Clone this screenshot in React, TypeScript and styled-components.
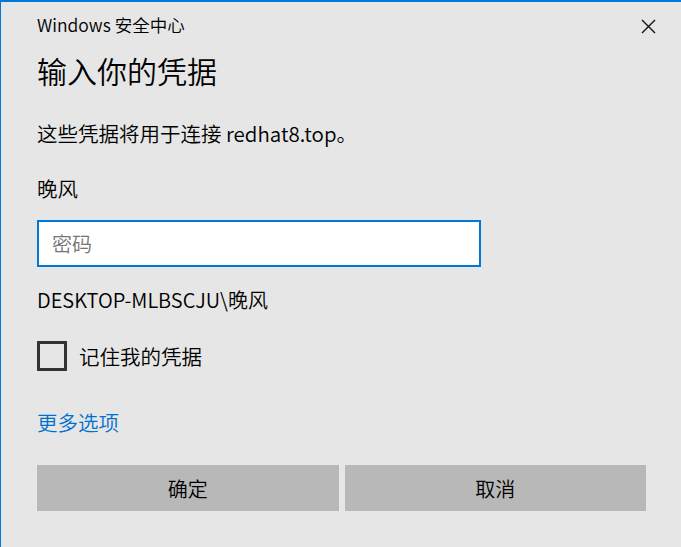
import styled, { createGlobalStyle } from 'styled-components'

const GlobalStyle = createGlobalStyle`
  html, body {
    margin: 0;
    padding: 0;
    background: #e6e6e6;
  }
  * {
    box-sizing: border-box;
  }
`

export default function App() {
  return (
    <>
      <GlobalStyle />
      <Window>
        <TitleBar>
          <Title>Windows 安全中心</Title>
          <CloseButton aria-label="关闭">
            <svg width="15" height="15" viewBox="0 0 15 15">
              <path d="M1 1 L14 14 M14 1 L1 14" stroke="#111" strokeWidth="1.4" fill="none" />
            </svg>
          </CloseButton>
        </TitleBar>
        <Content>
          <Heading>输入你的凭据</Heading>
          <Text marginTop="29px">这些凭据将用于连接 redhat8.top。</Text>
          <Text marginTop="27px">晚风</Text>
          <PasswordInput type="password" placeholder="密码" />
          <Text marginTop="19px" size="20px">DESKTOP-MLBSCJU\晚风</Text>
          <CheckRow>
            <CheckBox />
            <CheckLabel>记住我的凭据</CheckLabel>
          </CheckRow>
          <MoreLink href="#">更多选项</MoreLink>
          <ButtonRow>
            <Button>确定</Button>
            <Button>取消</Button>
          </ButtonRow>
        </Content>
      </Window>
    </>
  )
}

const font = `"Noto Sans CJK SC", "Noto Sans", sans-serif`

const Window = styled.div`
  height: 100vh;
  display: flex;
  flex-direction: column;
  background: #e6e6e6;
  border-top: 2px solid #0078d7;
  border-left: 1px solid #0078d7;
  font-family: ${font};
  font-weight: 350;
  color: #000;
`

const TitleBar = styled.div`
  height: 48px;
  display: flex;
  align-items: center;
  justify-content: space-between;
  padding: 0 25px 0 36px;
`

const Title = styled.div`
  font-size: 17.5px;
  line-height: 22px;
  margin-top: -2px;
`

const CloseButton = styled.button`
  background: none;
  border: none;
  padding: 0;
  width: 15px;
  height: 15px;
  display: flex;
  cursor: pointer;
`

const Content = styled.div`
  display: flex;
  flex-direction: column;
  padding: 0 35px 0 36px;
`

const Heading = styled.h1`
  margin: 0;
  font-size: 30px;
  font-weight: 350;
  line-height: 40px;
`

const Text = styled.div<{ marginTop?: string; size?: string }>`
  font-size: ${p => p.size || '20.5px'};
  line-height: 28px;
  margin-top: ${p => p.marginTop || '0'};
`

const PasswordInput = styled.input`
  margin-top: 18px;
  width: 444px;
  height: 47px;
  border: 2px solid #0078d7;
  background: #fff;
  padding: 0 13px;
  font-family: ${font};
  font-weight: 350;
  font-size: 20px;
  outline: none;

  ::placeholder {
    color: #999;
  }
`

const CheckRow = styled.div`
  margin-top: 27px;
  display: flex;
  align-items: center;
  gap: 12px;
  height: 30px;
`

const CheckBox = styled.div`
  width: 30px;
  height: 30px;
  border: 3px solid #333;
`

const CheckLabel = styled.span`
  font-size: 20.5px;
  line-height: 28px;
`

const MoreLink = styled.a`
  margin-top: 37px;
  font-size: 20.5px;
  line-height: 28px;
  color: #0070d0;
  text-decoration: none;
  align-self: flex-start;
`

const ButtonRow = styled.div`
  margin-top: 29px;
  display: grid;
  grid-template-columns: 1fr 1fr;
  gap: 6px;
`

const Button = styled.button`
  height: 46px;
  border: none;
  background: #b8b8b8;
  font-family: ${font};
  font-weight: 350;
  font-size: 20px;
  color: #000;
  cursor: pointer;
`
